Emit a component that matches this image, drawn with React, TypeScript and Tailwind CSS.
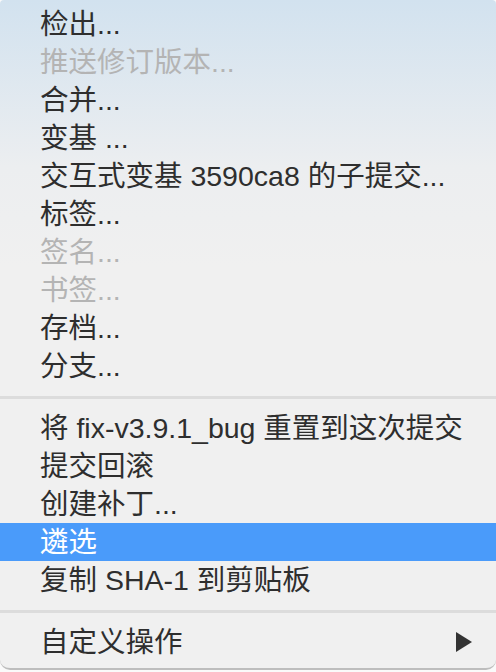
import { ReactNode } from "react"

type Item = { label: string; disabled?: boolean; active?: boolean; submenu?: boolean }

const groupA: Item[] = [
  { label: "检出..." },
  { label: "推送修订版本...", disabled: true },
  { label: "合并..." },
  { label: "变基 ..." },
  { label: "交互式变基 3590ca8 的子提交..." },
  { label: "标签..." },
  { label: "签名...", disabled: true },
  { label: "书签...", disabled: true },
  { label: "存档..." },
  { label: "分支..." },
]

const groupB: Item[] = [
  { label: "将 fix-v3.9.1_bug 重置到这次提交" },
  { label: "提交回滚" },
  { label: "创建补丁..." },
  { label: "遴选", active: true },
  { label: "复制 SHA-1 到剪贴板" },
]

function Row({ item }: { item: Item }) {
  let color = "text-[#2e2e2e]"
  if (item.disabled) color = "text-[#b4b4b4]"
  if (item.active) color = "text-white"
  return (
    <div
      className={`flex h-[38px] items-center pl-[40px] pr-[22px] ${color} ${item.active ? "bg-[#4a9bfa]" : ""}`}
    >
      <span className="flex-1 whitespace-nowrap">{item.label}</span>
      {item.submenu && (
        <svg width="18" height="20" viewBox="0 0 18 20" className="mr-[1px]">
          <path d="M1 0 L17 10 L1 20 Z" fill="#333333" />
        </svg>
      )}
    </div>
  )
}

function Separator(): ReactNode {
  return (
    <div className="flex h-[24px] items-center">
      <div className="h-[3px] w-full bg-[#dcdcdc]" />
    </div>
  )
}

export default function App() {
  return (
    <div className="h-[672px] w-[496px] overflow-hidden bg-[#fafafa]">
      <div
        className="rounded-b-[10px] rounded-t-[4px] border-b-[2px] border-[#bdbdbd] bg-gradient-to-b from-[#d2e2ef] via-[#eceef0] via-25% to-[#f0f0f0] to-40% pt-[5px] pb-[7px] text-[28.5px] leading-[38px]"
        style={{ fontFamily: '"Liberation Sans", "Noto Sans CJK SC", sans-serif' }}
      >
        {groupA.map((item) => (
          <Row key={item.label} item={item} />
        ))}
        <Separator />
        {groupB.map((item) => (
          <Row key={item.label} item={item} />
        ))}
        <Separator />
        <Row item={{ label: "自定义操作", submenu: true }} />
      </div>
    </div>
  )
}
